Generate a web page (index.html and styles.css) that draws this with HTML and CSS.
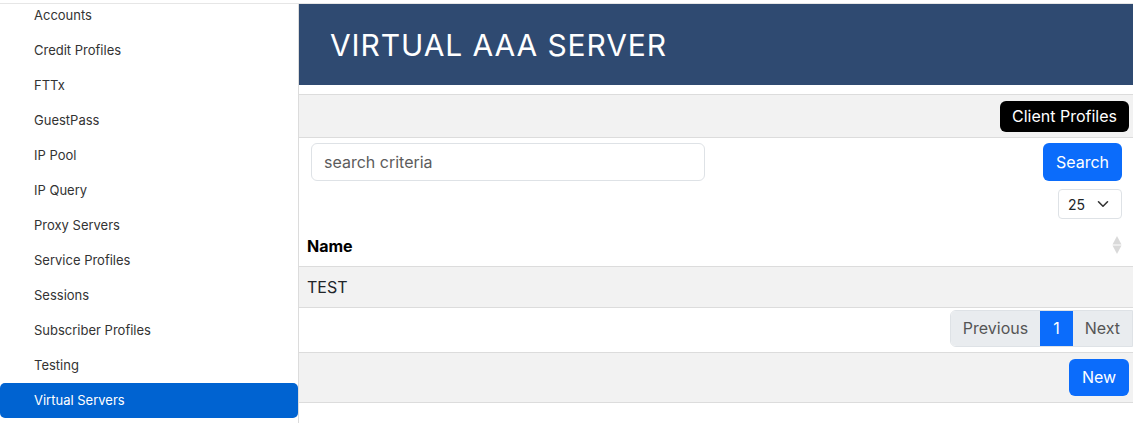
FILE: index.html
```html
<!DOCTYPE html>
<html lang="en">
<head>
<meta charset="utf-8">
<title>Virtual AAA Server</title>
<link rel="stylesheet" href="styles.css">
</head>
<body>
<div class="topline"></div>
<div class="layout">
  <aside class="sidebar">
    <ul class="nav">
      <li class="nav-item">Accounts</li>
      <li class="nav-item">Credit Profiles</li>
      <li class="nav-item">FTTx</li>
      <li class="nav-item">GuestPass</li>
      <li class="nav-item">IP Pool</li>
      <li class="nav-item">IP Query</li>
      <li class="nav-item">Proxy Servers</li>
      <li class="nav-item">Service Profiles</li>
      <li class="nav-item">Sessions</li>
      <li class="nav-item">Subscriber Profiles</li>
      <li class="nav-item">Testing</li>
      <li class="nav-item active">Virtual Servers</li>
    </ul>
  </aside>
  <main class="main">
    <header class="header"><h1 class="title">VIRTUAL AAA SERVER</h1></header>
    <div class="toolbar">
      <button class="btn btn-dark">Client Profiles</button>
    </div>
    <div class="search-row">
      <input class="search-input" type="text" placeholder="search criteria">
      <button class="btn btn-primary btn-search">Search</button>
    </div>
    <div class="length-row">
      <div class="select">25
        <svg class="chev" width="12" height="8" viewBox="0 0 12 8"><path d="M1.5 1.8 6 6.2 10.5 1.8" fill="none" stroke="#333" stroke-width="1.6" stroke-linecap="round" stroke-linejoin="round"/></svg>
      </div>
    </div>
    <table class="table">
      <thead>
        <tr><th class="th-name">Name
          <svg class="sort" width="10" height="18" viewBox="0 0 10 18"><path d="M5 0 9.5 8.6H0.5z" fill="#d9d9d9"/><path d="M5 18 9.5 9.4H0.5z" fill="#d9d9d9"/></svg>
        </th></tr>
      </thead>
      <tbody>
        <tr class="odd"><td>TEST</td></tr>
      </tbody>
    </table>
    <div class="pager-row">
      <div class="pagination">
        <span class="page prev">Previous</span>
        <span class="page current">1</span>
        <span class="page next">Next</span>
      </div>
    </div>
    <div class="footer-bar">
      <button class="btn btn-primary btn-new">New</button>
    </div>
  </main>
</div>
</body>
</html>
```

FILE: styles.css
```css
* { box-sizing: border-box; }
html, body { margin: 0; padding: 0; background: #fff; }
body {
  font-family: Inter, "Noto Sans", "Liberation Sans", sans-serif;
  color: #212529;
  overflow: hidden;
}
.topline {
  height: 4px;
  border-bottom: 1px solid #e6e6e6;
  position: relative;
  z-index: 2;
  background: #fff;
}
.layout {
  display: flex;
  height: 419px;
}
.sidebar {
  width: 299px;
  flex: 0 0 299px;
  border-right: 1px solid #dcdcdc;
  overflow: hidden;
}
.nav {
  list-style: none;
  margin: -6.5px 0 0 0;
  padding: 0;
}
.nav-item {
  height: 35px;
  display: flex;
  align-items: center;
  padding-left: 34px;
  font-size: 13px;
  color: #333;
}
.nav-item.active {
  background: #0063d1;
  color: #fff;
  border-radius: 5px;
}
.main {
  flex: 1;
  min-width: 0;
}
.header {
  height: 81px;
  background: #2f4a71;
  display: flex;
  align-items: center;
  padding-left: 31px;
}
.title {
  margin: 0;
  font-size: 30px;
  font-weight: 400;
  color: #fff;
  letter-spacing: 0.9px;
}
.btn {
  font-family: inherit;
  font-size: 16px;
  border: 0;
  border-radius: 6px;
  color: #fff;
  padding: 0 12px;
  cursor: pointer;
}
.btn-dark { background: #000; height: 31px; }
.btn-primary { background: #0b6cfb; }
.toolbar {
  margin-top: 9px;
  height: 44px;
  background: #f2f2f2;
  border-top: 1px solid #dcdcdc;
  border-bottom: 1px solid #dcdcdc;
  display: flex;
  justify-content: flex-end;
  align-items: center;
  padding-right: 4px;
}
.search-row {
  display: flex;
  justify-content: space-between;
  align-items: center;
  padding: 5px 11px 0 12px;
}
.search-input {
  width: 394px;
  height: 38px;
  border: 1px solid #dee2e6;
  border-radius: 6px;
  padding: 0 12px;
  font-family: inherit;
  font-size: 16px;
  color: #212529;
  outline: none;
}
.search-input::placeholder { color: #5c5c5c; }
.btn-search { height: 38px; width: 79px; }
.length-row {
  display: flex;
  justify-content: flex-end;
  padding: 8px 11px 0 0;
}
.select {
  width: 64px;
  height: 30px;
  border: 1px solid #dee2e6;
  border-radius: 4px;
  display: flex;
  align-items: center;
  justify-content: space-between;
  padding: 0 12px 0 9px;
  font-size: 14px;
  color: #212529;
}
.table {
  width: 100%;
  border-collapse: collapse;
  margin-top: 6px;
}
.table th, .table td {
  text-align: left;
  padding: 0 8px;
  font-size: 16px;
  height: 41px;
  border-bottom: 1px solid #dcdcdc;
}
.table th { font-weight: 700; color: #000; position: relative; padding-top: 2px; }
.table td { color: #212529; }
.sort { position: absolute; right: 11px; top: 11px; }
.table tr.odd td { background: #f2f2f2; }
.pager-row {
  display: flex;
  justify-content: flex-end;
  padding-top: 2px;
  height: 45px;
  border-bottom: 1px solid #dcdcdc;
}
.pagination {
  display: flex;
  height: 37px;
  border: 1px solid #dee2e6;
  border-radius: 6px 0 0 6px;
  overflow: hidden;
}
.page {
  display: flex;
  align-items: center;
  padding: 0 12px;
  font-size: 16px;
  color: #555;
  background: #e9ecef;
}
.page.current { background: #0b6cfb; color: #fff; padding: 0 13px; }
.footer-bar {
  height: 50px;
  background: #f2f2f2;
  border-bottom: 1px solid #dcdcdc;
  display: flex;
  justify-content: flex-end;
  align-items: flex-start;
  padding: 6px 4px 0 0;
}
.btn-new { height: 37px; width: 60px; }
```
